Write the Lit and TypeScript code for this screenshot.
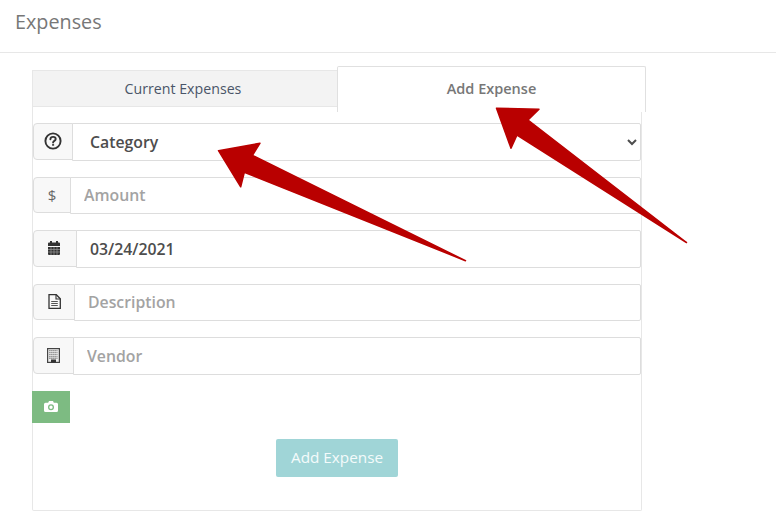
import { LitElement, html, css, svg } from "lit";
import { customElement } from "lit/decorators.js";

const helpIcon = svg`<svg class="ic" width="18" height="18" viewBox="0 0 18 18" fill="none" stroke="#333" stroke-width="1.9"><circle cx="9" cy="9" r="7.6"/><path d="M6.4 7.2c.1-1.6 1.2-2.3 2.7-2.3 1.500 0 2.600.8 2.600 2.100 0 1.900-2.600 1.800-2.600 3.500" stroke-linecap="round"/><path d="M9.100 12.100v1.600" stroke-width="2"/></svg>`;
const calIcon = svg`<svg class="ic" width="12" height="14" viewBox="0 0 12 14"><path fill="#333" d="M2 0h2v1.500h4V0h2v1.500h1a1 1 0 0 1 1 1V5H0V2.500a1 1 0 0 1 1-1h1zM0 6h12v7a1 1 0 0 1-1 1H1a1 1 0 0 1-1-1z"/><path stroke="#999" stroke-width=".7" d="M0 8.500h12M0 11h12M3 6v8M6 6v8M9 6v8"/></svg>`;
const docIcon = svg`<svg class="ic" width="13" height="15" viewBox="0 0 13 15" fill="none" stroke="#333"><path stroke-width="1.300" d="M1 .7h7.300L12.300 4.700V14.300H1z"/><path stroke-width="1.100" d="M8 .7V5h4.300"/><path stroke-width="1" stroke="#555" d="M3.200 7.500h6.600M3.200 9.500h6.600M3.200 11.500h6.600"/></svg>`;
const buildingIcon = svg`<svg class="ic" width="13" height="15" viewBox="0 0 13 15"><rect x=".6" y=".6" width="11.800" height="13.800" fill="#eee" stroke="#444" stroke-width="1.200"/><path stroke="#777" stroke-width="1.100" stroke-dasharray="1.200 .8" d="M2.300 2.600h8.400M2.300 4.600h8.400M2.300 6.600h8.400M2.300 8.600h8.400M2.300 10.400h8.400"/><rect x="4" y="11.500" width="5" height="3" fill="#333"/></svg>`;
const camIcon = svg`<svg width="14" height="11" viewBox="0 0 14 11"><path fill="#fff" fill-rule="evenodd" d="M1.500 1.700h2.700L5 0h4l.8 1.700h2.700A1.500 1.500 0 0 1 14 3.200v6.300A1.500 1.500 0 0 1 12.500 11h-11A1.500 1.500 0 0 1 0 9.500V3.200a1.500 1.500 0 0 1 1.500-1.500zM7 3.300a3 3 0 1 0 0 6 3 3 0 0 0 0-6zm0 1.300a1.700 1.700 0 1 1 0 3.400 1.700 1.700 0 0 1 0-3.400z"/></svg>`;

@customElement("app-root")
export class AppRoot extends LitElement {
  static styles = css`
    :host {
      display: block;
      position: relative;
      width: 776px;
      height: 514px;
      overflow: hidden;
      background: #fff;
      font-family: "Open Sans", sans-serif;
      font-size: 14px;
      color: #555;
    }
    .title {
      height: 52px;
      box-sizing: content-box;
      border-bottom: 1px solid #e7e7e7;
      padding-left: 15px;
      font-size: 19.8px;
      line-height: 44px;
      color: #777;
    }
    .content {
      padding: 13px 0 0 32px;
    }
    .tabs {
      display: flex;
      align-items: flex-start;
      height: 41px;
      position: relative;
      z-index: 1;
    }
    .tab {
      box-sizing: border-box;
      display: flex;
      align-items: center;
      justify-content: center;
    }
    .tab.off {
      width: 305px;
      height: 37px;
      margin-top: 4px;
      padding-right: 4px;
      background: #f3f3f3;
      border: 1px solid #e7e7e7;
      border-right: none;
      font-size: 14.2px;
      color: #4a5568;
    }
    .tab.on {
      width: 309px;
      height: 46px;
      padding-bottom: 2px;
      background: #fff;
      border: 1px solid #e0e0e0;
      border-bottom: none;
      border-radius: 2px 2px 0 0;
      font-size: 14.5px;
      font-weight: 600;
      color: #777;
    }
    .panel {
      box-sizing: border-box;
      width: 610px;
      height: 404px;
      background: #fff;
      border: 1px solid #e7e7e7;
      border-top: none;
      border-radius: 0 0 2px 2px;
      padding-top: 16px;
      display: flex;
      flex-direction: column;
      gap: 16px;
    }
    .row {
      display: flex;
      align-items: flex-start;
      height: 37.5px;
    }
    .addon {
      box-sizing: border-box;
      height: 36.5px;
      flex: none;
      display: flex;
      align-items: center;
      justify-content: center;
      background: #f8f8f8;
      border: 1px solid #ddd;
      border-radius: 4px 0 0 4px;
      font-size: 15px;
      color: #666;
    }
    .w40 { width: 40px; }
    .w38 { width: 38px; }
    .w44 { width: 44px; padding-right: 2px; }
    .w42 { width: 42px; }
    .w41 { width: 41px; }
    .field {
      box-sizing: border-box;
      flex: 1;
      min-width: 0;
      height: 37.5px;
      margin-left: -1px;
      background: #fff;
      border: 1px solid #ddd;
      border-radius: 0 2px 2px 0;
      padding: 0 13px;
      font: 600 15.8px "Open Sans", sans-serif;
      color: #4d4d4d;
      outline: none;
    }
    input.field::placeholder {
      color: #a3a3a3;
      opacity: 1;
    }
    .cam {
      box-sizing: border-box;
      width: 38px;
      height: 32px;
      margin-left: -1px;
      border: none;
      padding: 0;
      background: #7dbb82;
      display: flex;
      align-items: center;
      justify-content: center;
      flex: none;
    }
    .submit {
      align-self: center;
      width: 122px;
      height: 38px;
      flex: none;
      border: none;
      border-radius: 2px;
      background: #a0d5d7;
      color: #f4fbfb;
      font: 400 15.3px "Open Sans", sans-serif;
      padding: 0 0 2px;
    }
    .arrows {
      position: absolute;
      left: 0;
      top: 0;
      z-index: 2;
      pointer-events: none;
    }
    .ic { display: block; }
  `;

  render() {
    return html`
      <div class="title">Expenses</div>
      <div class="content">
        <div class="tabs">
          <div class="tab off">Current Expenses</div>
          <div class="tab on">Add Expense</div>
        </div>
        <div class="panel">
          <div class="row">
            <span class="addon w40">${helpIcon}</span>
            <select class="field"><option>Category</option></select>
          </div>
          <div class="row">
            <span class="addon w38">$</span>
            <input class="field" placeholder="Amount" />
          </div>
          <div class="row">
            <span class="addon w44">${calIcon}</span>
            <input class="field" value="03/24/2021" />
          </div>
          <div class="row">
            <span class="addon w42">${docIcon}</span>
            <input class="field" placeholder="Description" />
          </div>
          <div class="row">
            <span class="addon w41">${buildingIcon}</span>
            <input class="field" placeholder="Vendor" />
          </div>
          <button class="cam">${camIcon}</button>
          <button class="submit">Add Expense</button>
        </div>
      </div>
      <svg class="arrows" width="776" height="514" viewBox="0 0 776 514">
        <g fill="#b90000" stroke="#b90000" stroke-width="1.500" stroke-linejoin="round">
          <path d="M218.500 150.700 260 143.200 252.500 155.300 465.500 260.700 244.300 172.300 240.700 186.800z" />
          <path d="M496.500 108.200 539 109.200 528 120 686.500 242.500 517 135 511 148.200z" />
        </g>
      </svg>
    `;
  }
}
